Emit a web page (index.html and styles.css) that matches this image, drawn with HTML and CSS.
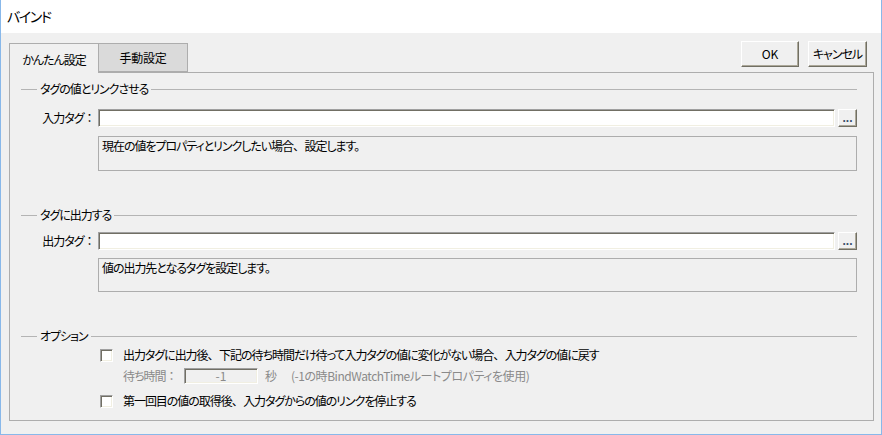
FILE: index.html
```html
<!DOCTYPE html>
<html lang="ja">
<head>
<meta charset="utf-8">
<title>バインド</title>
<link rel="stylesheet" href="styles.css">
</head>
<body>
<div class="window">
  <div class="titlebar">バインド</div>
  <div class="main">
    <div class="toprow">
      <div class="tabs">
        <div class="tab active">かんたん設定</div>
        <div class="tab">手動設定</div>
      </div>
      <div class="buttons">
        <div class="btn ok">OK</div>
        <div class="btn cancel">キャンセル</div>
      </div>
    </div>
    <div class="panel">
      <div class="ghead g1"><span class="gline short"></span><span class="gtitle">タグの値とリンクさせる</span><span class="gline long"></span></div>
      <div class="frow r1">
        <div class="flabel">入力タグ<span class="fw">：</span></div>
        <div class="finput"></div>
        <div class="browse">...</div>
      </div>
      <div class="desc d1">現在の値をプロパティとリンクしたい場合<span class="fw">、</span>設定します。</div>

      <div class="ghead g2"><span class="gline short"></span><span class="gtitle">タグに出力する</span><span class="gline long"></span></div>
      <div class="frow r2">
        <div class="flabel">出力タグ<span class="fw">：</span></div>
        <div class="finput"></div>
        <div class="browse">...</div>
      </div>
      <div class="desc d2">値の出力先となるタグを設定します。</div>

      <div class="ghead g3"><span class="gline short"></span><span class="gtitle">オプション</span><span class="gline long"></span></div>
      <div class="crow c1"><span class="check"></span><span class="ctext">出力タグに出力後<span class="fw">、</span>下記の待ち時間だけ待って入力タグの値に変化がない場合<span class="fw">、</span>入力タグの値に戻す</span></div>
      <div class="wrow">
        <span class="wlabel">待ち時間<span class="fw">：</span></span>
        <span class="winput">-1</span>
        <span class="wunit">秒</span>
        <span class="wnote">(-1の時BindWatchTimeルートプロパティを使用)</span>
      </div>
      <div class="crow c2"><span class="check"></span><span class="ctext">第一回目の値の取得後<span class="fw">、</span>入力タグからの値のリンクを停止する</span></div>
    </div>
  </div>
</div>
</body>
</html>
```

FILE: styles.css
```css
* { box-sizing: border-box; }
html, body {
  margin: 0;
  padding: 0;
  background: #f0f0f0;
}
body {
  font-family: "Noto Sans CJK JP", "Noto Sans", sans-serif;
  font-size: 12px;
  line-height: 16px;
  color: #000;
  font-feature-settings: "palt";
  letter-spacing: -1.05px;
}
.fw {
  font-feature-settings: normal;
  letter-spacing: -0.5px;
}
.window {
  width: 882px;
  height: 435px;
  border-left: 1px solid #88b8ea;
  border-right: 1px solid #88b8ea;
  border-bottom: 1px solid #88b8ea;
  display: flex;
  flex-direction: column;
  background: #f0f0f0;
}
.titlebar {
  height: 33px;
  background: #fff;
  display: flex;
  align-items: center;
  padding-left: 6px;
  padding-bottom: 1px;
  font-size: 14px;
  letter-spacing: -1.4px;
}
.main {
  flex: 1;
  display: flex;
  flex-direction: column;
  padding: 8px 7px 13px 8px;
}
.toprow {
  display: flex;
  justify-content: space-between;
  align-items: flex-start;
  height: 32px;
  margin-bottom: -1px;
}
.tabs {
  display: flex;
  margin-top: 2px;
  height: 30px;
}
.tab {
  height: 30px;
  display: flex;
  align-items: center;
  justify-content: center;
  border-top: 1px solid #adadad;
  border-left: 1px solid #adadad;
}
.tab.active {
  width: 89px;
  background: #f0f0f0;
  padding-top: 2px;
  position: relative;
  z-index: 1;
}
.tab:not(.active) {
  width: 90px;
  height: 29px;
  background: #dadada;
  border-right: 1px solid #adadad;
  border-bottom: 1px solid #adadad;
  letter-spacing: -0.3px;
}
.buttons {
  display: flex;
  gap: 9px;
  margin-right: 7px;
}
.btn {
  height: 26px;
  display: flex;
  align-items: center;
  justify-content: center;
  background: #f0f0f0;
  border-top: 1px solid #fff;
  border-left: 1px solid #fff;
  border-right: 1px solid #716f64;
  border-bottom: 1px solid #716f64;
  box-shadow: inset -1px -1px 0 #aca899;
}
.btn.ok { width: 58px; letter-spacing: 0; }
.btn.cancel { width: 59px; }
.panel {
  flex: 1;
  border: 1px solid #adadad;
  background: #f0f0f0;
  padding: 8px 16px 0 11px;
  display: flex;
  flex-direction: column;
}
.ghead {
  display: flex;
  align-items: center;
  height: 16px;
}
.gline {
  height: 1px;
  background: #b4b4b4;
}
.gline.short { width: 16px; margin-right: 3px; }
.gline.long { flex: 1; margin-left: 3px; }
.g2, .g3 { margin-top: 36px; }
.frow {
  display: flex;
  align-items: center;
  height: 18px;
}
.r1 { margin-top: 12px; }
.r2 { margin-top: 9px; }
.flabel {
  width: 77px;
  text-align: right;
  padding-right: 3px;
}
.finput {
  width: 737px;
  height: 18px;
  background: #fff;
  border-top: 1px solid #a0a0a0;
  border-left: 1px solid #a0a0a0;
  border-right: 1px solid #fff;
  border-bottom: 1px solid #fff;
  box-shadow: inset 1px 1px 0 #716f64, inset -1px -1px 0 #f1efe2;
}
.browse {
  width: 19px;
  height: 18px;
  margin-left: 3px;
  background: #f0f0f0;
  border-top: 1px solid #fff;
  border-left: 1px solid #fff;
  border-right: 1px solid #716f64;
  border-bottom: 1px solid #716f64;
  box-shadow: inset -1px -1px 0 #aca899;
  font-size: 12px;
  font-weight: bold;
  line-height: 10px;
  color: #3a4e6a;
  display: flex;
  justify-content: center;
  align-items: flex-end;
  padding-bottom: 3px;
  letter-spacing: 0;
  font-family: "Liberation Sans", sans-serif;
}
.desc {
  margin-left: 77px;
  border: 1px solid #adadad;
  padding: 1px 3px 0;
}
.d1 { margin-top: 9px; height: 35px; }
.d2 { margin-top: 8px; height: 34px; }
.crow {
  display: flex;
  align-items: center;
  height: 16px;
  padding-left: 79px;
}
.c1 { margin-top: 3px; }
.c2 { margin-top: 9px; }
.check {
  width: 13px;
  height: 13px;
  margin-right: 10px;
  background: #fff;
  border-top: 1px solid #a0a0a0;
  border-left: 1px solid #a0a0a0;
  border-right: 1px solid #fff;
  border-bottom: 1px solid #fff;
  box-shadow: inset 1px 1px 0 #716f64, inset -1px -1px 0 #f1efe2;
}
.wrow {
  display: flex;
  align-items: center;
  height: 16px;
  margin-top: 5px;
  padding-left: 102px;
  color: #8a8a8a;
}
.wlabel { width: 61px; }
.winput {
  width: 74px;
  height: 16px;
  display: flex;
  align-items: center;
  justify-content: center;
  background: #f0f0f0;
  letter-spacing: 0;
  border-top: 1px solid #a0a0a0;
  border-left: 1px solid #a0a0a0;
  border-right: 1px solid #fff;
  border-bottom: 1px solid #fff;
  box-shadow: inset 1px 1px 0 #716f64, inset -1px -1px 0 #f1efe2;
}
.wunit { margin-left: 7px; }
.wnote { margin-left: 15px; letter-spacing: -0.45px; }
```
